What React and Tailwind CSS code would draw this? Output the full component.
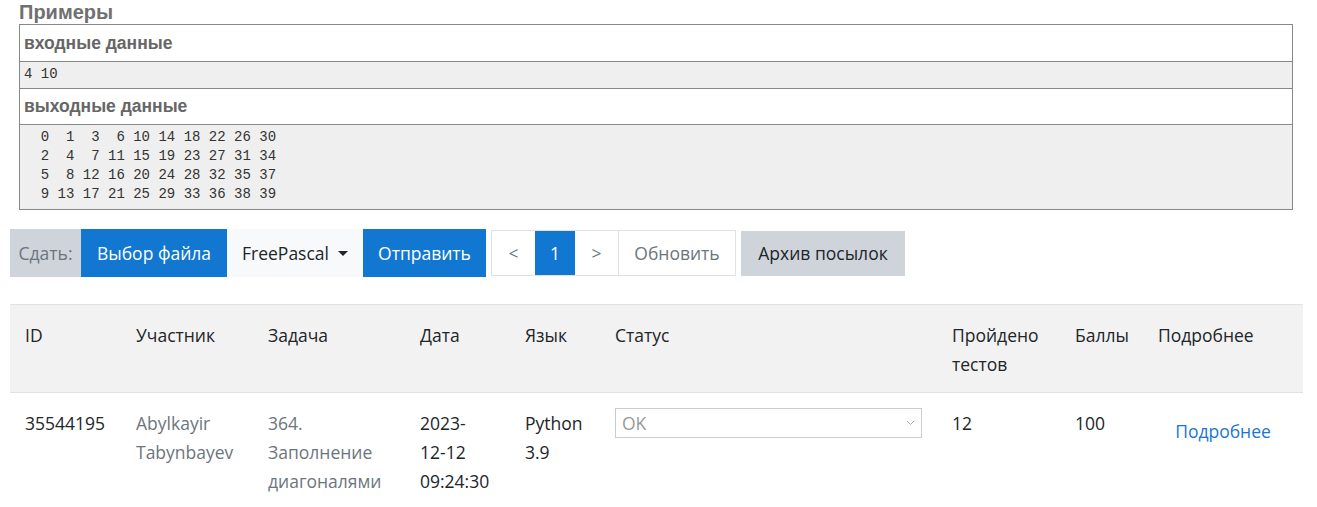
const outputLines = [
  "  0  1  3  6 10 14 18 22 26 30",
  "  2  4  7 11 15 19 23 27 31 34",
  "  5  8 12 16 20 24 28 32 35 37",
  "  9 13 17 21 25 29 33 36 38 39",
];

const cols = "grid grid-cols-[111px_132px_152px_105px_90px_337px_123px_83px_160px]";

const Examples = () => (
  <div className="pl-[19px] pr-[24px]">
    <h3 className="text-[20px] font-bold leading-[24px] text-[#707070]">
      Примеры
    </h3>
    <div className="border border-[#888]">
      <div className="h-[36px] bg-white flex items-center px-[4px] text-[17.5px] font-bold text-[#666]">
        входные данные
      </div>
      <pre className="h-[27px] bg-[#efefef] border-t border-[#888] px-[4px] pt-[3px] text-[14px] leading-[19px] text-[#333] font-['Liberation_Mono',monospace]">
        4 10
      </pre>
      <div className="h-[36px] bg-white border-t border-[#888] flex items-center px-[4px] text-[17.5px] font-bold text-[#666]">
        выходные данные
      </div>
      <pre className="h-[85px] bg-[#efefef] border-t border-[#888] px-[4px] pt-[3px] text-[14px] leading-[19px] text-[#333] font-['Liberation_Mono',monospace]">
        {outputLines.join("\n")}
      </pre>
    </div>
  </div>
);

const Toolbar = () => (
  <div className="flex items-center pl-[10px] mt-[19px] text-[17.5px] font-['Open_Sans',sans-serif]">
    <div className="w-[71px] h-[48px] flex items-center justify-center bg-[#ced4da] text-[#6c757d]">Сдать:</div>
    <button className="w-[146px] h-[48px] bg-[#1177d1] text-white whitespace-nowrap">Выбор файла</button>
    <button className="w-[136px] h-[48px] bg-[#f8f9fa] text-[#212529] flex items-center justify-center gap-[9px]">
      FreePascal
      <span className="w-0 h-0 border-l-[5px] border-r-[5px] border-t-[5px] border-l-transparent border-r-transparent border-t-[#212529]" />
    </button>
    <button className="w-[123px] h-[48px] bg-[#1177d1] text-white">Отправить</button>
    <div className="ml-[5px] w-[245px] h-[46px] flex border border-[#dee2e6] text-[#6c757d]">
      <div className="w-[43px] flex items-center justify-center">&lt;</div>
      <div className="w-[40px] flex items-center justify-center bg-[#1177d1] text-white">1</div>
      <div className="w-[44px] flex items-center justify-center border-r border-[#dee2e6]">&gt;</div>
      <div className="flex-1 flex items-center justify-center">Обновить</div>
    </div>
    <button className="ml-[5px] w-[164px] h-[45px] bg-[#ced4da] text-[#212529] whitespace-nowrap">Архив посылок</button>
  </div>
);

const Submissions = () => (
  <div className="mx-[10px] mt-[27px] w-[1293px] text-[17.5px] leading-[29px] font-['Open_Sans',sans-serif] text-[#212529]">
    <div className={`${cols} bg-[#f2f2f2] border-t border-b border-[#e2e2e2] h-[89px]`}>
      {["ID", "Участник", "Задача", "Дата", "Язык", "Статус"].map((h) => (
        <div key={h} className="px-[15px] pt-[16px]">{h}</div>
      ))}
      <div className="px-[15px] pt-[16px]">Пройдено<br />тестов</div>
      <div className="px-[15px] pt-[16px]">Баллы</div>
      <div className="px-[15px] pt-[16px]">Подробнее</div>
    </div>
    <div className={`${cols}`}>
      <div className="px-[15px] pt-[16px]">35544195</div>
      <div className="px-[15px] pt-[16px] text-[#6c757d]">Abylkayir<br />Tabynbayev</div>
      <div className="px-[15px] pt-[16px] text-[#6c757d]">364.<br />Заполнение<br />диагоналями</div>
      <div className="px-[15px] pt-[16px]">2023-<br />12-12<br />09:24:30</div>
      <div className="px-[15px] pt-[16px]">Python<br />3.9</div>
      <div className="px-[15px] pt-[15px]">
        <div className="h-[30px] border border-[#ccc] flex items-center justify-between pl-[6px] pr-[6px] text-[#999]">
          <span>OK</span>
          <svg width="9" height="6" viewBox="0 0 9 6" fill="none" stroke="#aaa" strokeWidth="1">
            <path d="M1 1l3.5 3.5L8 1" />
          </svg>
        </div>
      </div>
      <div className="px-[15px] pt-[16px]">12</div>
      <div className="px-[15px] pt-[16px]">100</div>
      <div className="px-[15px] pt-[24px] text-center text-[#1976d2]">Подробнее</div>
    </div>
  </div>
);

export default function App() {
  return (
    <div className="w-[1317px] h-[507px] overflow-hidden bg-white font-['Liberation_Sans',sans-serif]">
      <Examples />
      <Toolbar />
      <Submissions />
    </div>
  );
}
